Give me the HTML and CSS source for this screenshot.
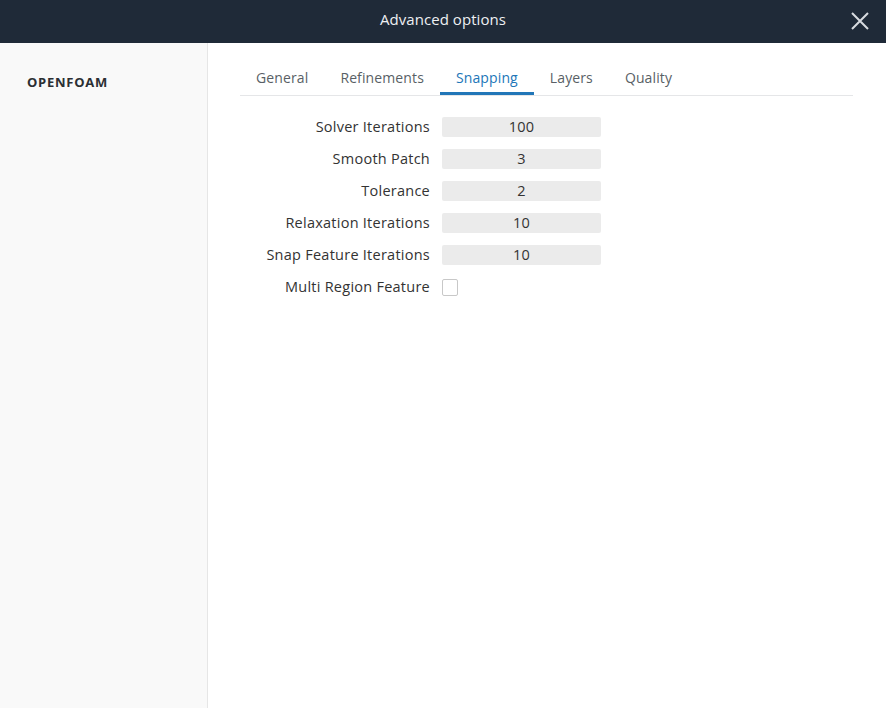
FILE: index.html
```html
<!DOCTYPE html>
<html>
<head>
<meta charset="utf-8">
<link rel="stylesheet" href="styles.css">
</head>
<body>
<header class="topbar">
  <span class="title">Advanced options</span>
  <button class="close" aria-label="Close">
    <svg width="18" height="18" viewBox="0 0 18 18"><path d="M1 1 L17 17 M17 1 L1 17" stroke="#d8dbe0" stroke-width="2" fill="none"/></svg>
  </button>
</header>
<div class="main">
  <aside class="sidebar">
    <div class="side-item">OPENFOAM</div>
  </aside>
  <section class="content">
    <nav class="tabs">
      <div class="tab">General</div>
      <div class="tab">Refinements</div>
      <div class="tab active">Snapping</div>
      <div class="tab">Layers</div>
      <div class="tab">Quality</div>
    </nav>
    <div class="form">
      <label class="lbl">Solver Iterations</label><div class="input">100</div>
      <label class="lbl">Smooth Patch</label><div class="input">3</div>
      <label class="lbl">Tolerance</label><div class="input">2</div>
      <label class="lbl">Relaxation Iterations</label><div class="input">10</div>
      <label class="lbl">Snap Feature Iterations</label><div class="input">10</div>
      <label class="lbl">Multi Region Feature</label><div class="check-cell"><span class="checkbox"></span></div>
    </div>
  </section>
</div>
</body>
</html>
```
FILE: styles.css
```css
html, body {
  margin: 0;
  padding: 0;
  height: 100%;
  background: #ffffff;
  font-family: "Open Sans", "Noto Sans", sans-serif;
  color: #333;
}
.topbar {
  height: 43px;
  background: #1f2a38;
  display: flex;
  align-items: center;
  justify-content: center;
  position: relative;
}
.title {
  color: #eef0f3;
  font-size: 15px;
  letter-spacing: 0.05px;
  margin-top: -6px;
}
.close {
  position: absolute;
  right: 17px;
  top: 12px;
  width: 18px;
  height: 18px;
  padding: 0;
  border: 0;
  background: none;
  display: flex;
}
.main {
  display: flex;
  height: calc(100% - 43px);
}
.sidebar {
  width: 207px;
  background: #f9f9f9;
  border-right: 1px solid #e6e6e6;
  flex-shrink: 0;
}
.side-item {
  padding: 30px 0 0 27px;
  font-size: 13px;
  font-weight: 700;
  letter-spacing: 0.75px;
  color: #2b2f33;
}
.content {
  flex: 1;
  padding: 0 33px 0 32px;
}
.tabs {
  display: flex;
  margin-top: 17px;
  border-bottom: 1px solid #e5e6e8;
}
.tab {
  padding: 0 16px;
  height: 35px;
  line-height: 35px;
  font-size: 14px;
  letter-spacing: 0.12px;
  color: #595f66;
  box-sizing: border-box;
}
.tab.active {
  color: #2176b8;
  border-bottom: 3px solid #2176b8;
}
.form {
  display: grid;
  grid-template-columns: 190px 159px;
  column-gap: 12px;
  row-gap: 12px;
  margin-top: 21px;
}
.lbl {
  text-align: right;
  font-size: 14.5px;
  letter-spacing: 0.25px;
  line-height: 20px;
  color: #333;
  white-space: nowrap;
}
.input {
  height: 20px;
  line-height: 19px;
  background: #ebebeb;
  border-radius: 2px;
  text-align: center;
  font-size: 14.5px;
  letter-spacing: 0.25px;
  color: #333;
}
.check-cell {
  display: flex;
  align-items: center;
}
.checkbox {
  width: 14px;
  height: 15px;
  border: 1px solid #c8c8c8;
  border-radius: 2px;
  background: #fff;
}
```
